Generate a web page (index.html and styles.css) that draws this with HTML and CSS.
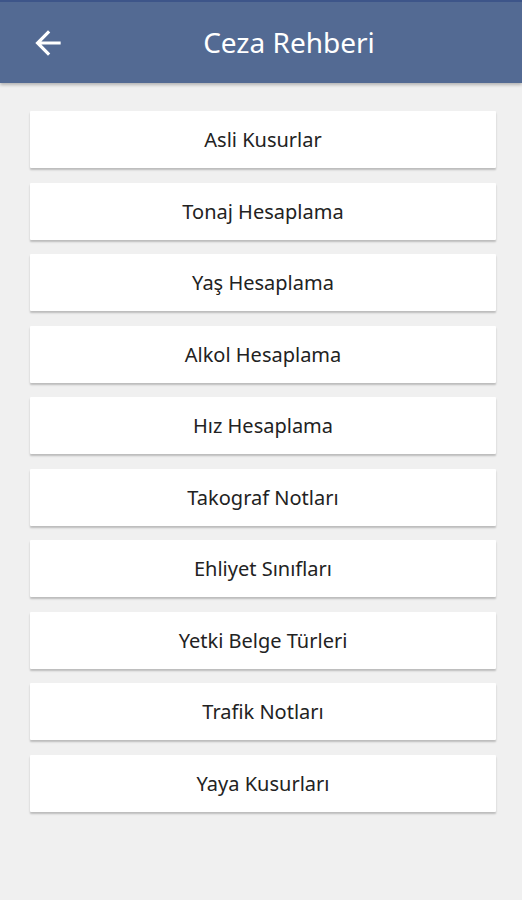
FILE: index.html
```html
<html>
<head>
<title>Ceza Rehberi</title>
<meta http-equiv="Content-Type" content="text/html; charset=UTF-8" />
<link rel="stylesheet" href="styles.css">
</head>
<body>

<div class="Header">
  <div class="Back">
    <svg width="38" height="38" viewBox="0 0 24 24"><path d="M20 11H7.83l5.59-5.59L12 4l-8 8 8 8 1.41-1.41L7.83 13H20v-2z" fill="#fff"/></svg>
  </div>
  <div class="Title">Ceza Rehberi</div>
</div>

<div class="List">
  <div class="Card">Asli Kusurlar</div>
  <div class="Card">Tonaj Hesaplama</div>
  <div class="Card">Yaş Hesaplama</div>
  <div class="Card">Alkol Hesaplama</div>
  <div class="Card">Hız Hesaplama</div>
  <div class="Card">Takograf Notları</div>
  <div class="Card">Ehliyet Sınıfları</div>
  <div class="Card">Yetki Belge Türleri</div>
  <div class="Card">Trafik Notları</div>
  <div class="Card">Yaya Kusurları</div>
</div>

</body>
</html>
```

FILE: styles.css
```css
body{
   margin:0;
   background:#f0f0f0;
   font-family:"Noto Sans","Open Sans",sans-serif;
   -webkit-font-smoothing: antialiased;
}
.Header{
   display:flex;
   align-items:center;
   height:81px;
   background:#536a93;
   border-top:2px solid #3d5589;
   box-shadow:0 2px 3px rgba(0,0,0,0.25);
}
.Back{
   width:72px;
   display:flex;
   justify-content:center;
   padding-left:24px;
   box-sizing:border-box;
   padding-top:1px;
}
.Title{
   flex:1;
   text-align:center;
   padding-right:16px;
   color:#fff;
   font-size:28px;
   padding-bottom:2px;
}
.List{
   display:flex;
   flex-direction:column;
   gap:14.5px;
   padding:28px 26px 0 30px;
}
.Card{
   height:57px;
   display:flex;
   align-items:center;
   justify-content:center;
   background:#fff;
   color:#222;
   font-size:20px;
   box-shadow:0 2px 2px rgba(0,0,0,0.22);
   border-radius:1px;
}
```
